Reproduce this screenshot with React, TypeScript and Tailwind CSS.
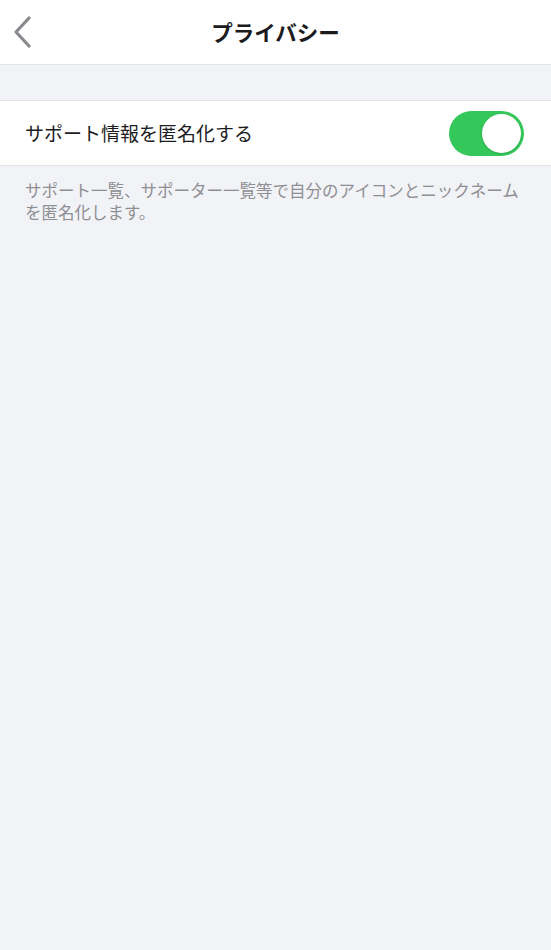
import React, { useState } from 'react';

const font = { fontFamily: '"Noto Sans CJK JP", "Noto Sans", sans-serif' };

const Toggle: React.FC<{ on: boolean; onChange: (v: boolean) => void }> = ({ on, onChange }) => (
  <button
    onClick={() => onChange(!on)}
    className={`flex h-[45px] w-[75px] items-center rounded-full p-[3px] transition-colors ${
      on ? 'justify-end bg-[#34c759]' : 'justify-start bg-[#e5e5ea]'
    }`}
  >
    <span className="block h-[39px] w-[39px] rounded-full bg-white shadow-[0_1px_2px_rgba(0,0,0,0.15)]" />
  </button>
);

const App: React.FC = () => {
  const [anon, setAnon] = useState(true);

  return (
    <div className="min-h-[950px] bg-[#f2f3f7]" style={font}>
      {/* header */}
      <div className="relative flex h-[65px] items-center justify-center border-b border-[#e3e4e8] bg-white">
        <button className="absolute left-[10px] top-[16px] flex h-[32px] w-[24px] items-center justify-center">
          <svg width="20" height="32" viewBox="0 0 20 32" fill="none">
            <path d="M17 2 L4 16 L17 30" stroke="#8a8a8e" strokeWidth="3.2" strokeLinecap="round" strokeLinejoin="round" />
          </svg>
        </button>
        <h1 className="text-[21.5px] font-bold text-[#1c1c1e]">プライバシー</h1>
      </div>

      {/* setting row */}
      <div className="mt-[35px] flex h-[66px] items-center justify-between border-y border-[#e3e4e8] bg-white pl-[25px] pr-[27px]">
        <span className="text-[19px] text-[#1c1c1e]">サポート情報を匿名化する</span>
        <Toggle on={anon} onChange={setAnon} />
      </div>

      <p className="px-[25px] pt-[13px] text-[16.5px] leading-[22px] text-[#8e8e93]">
        サポート一覧、サポーター一覧等で自分のアイコンとニックネームを匿名化します。
      </p>
    </div>
  );
};

export default App;
